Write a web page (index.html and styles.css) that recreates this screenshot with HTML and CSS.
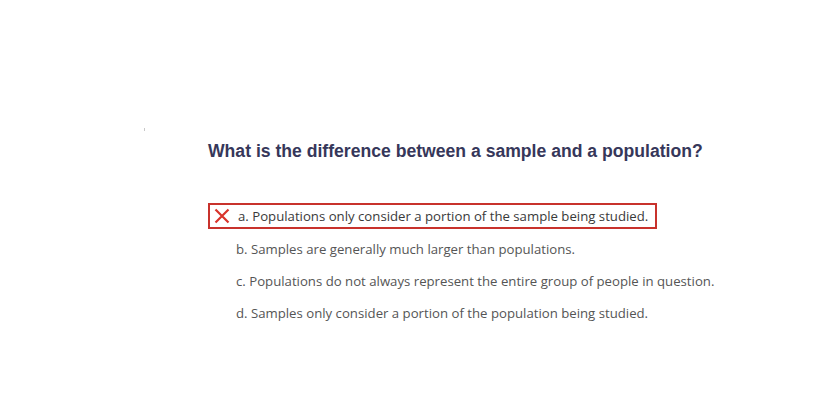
FILE: index.html
```html
<!DOCTYPE html>
<html>
<head>
<meta charset="utf-8">
<link rel="stylesheet" href="styles.css">
</head>
<body>
<div class="page">
  <span class="tick"></span>
  <div class="question">
    <h2 class="title">What is the difference between a sample and a population?</h2>
    <ul class="options">
      <li class="option wrong">
        <svg class="xicon" width="16" height="16" viewBox="0 0 16 16"><path d="M1.5 1.5 L14.5 14.5 M14.5 1.5 L1.5 14.5" stroke="#d9342b" stroke-width="2.2" fill="none"/></svg>
        <span>a. Populations only consider a portion of the sample being studied.</span>
      </li>
      <li class="option"><span>b. Samples are generally much larger than populations.</span></li>
      <li class="option"><span>c. Populations do not always represent the entire group of people in question.</span></li>
      <li class="option"><span>d. Samples only consider a portion of the population being studied.</span></li>
    </ul>
  </div>
</div>
</body>
</html>
```

FILE: styles.css
```css
html, body {
  margin: 0;
  padding: 0;
  background: #fff;
}
.page {
  position: relative;
  width: 814px;
  height: 404px;
}
.tick {
  position: absolute;
  left: 144px;
  top: 128px;
  width: 1px;
  height: 3px;
  background: #c8c8c8;
}
.question {
  padding: 140px 0 0 208px;
}
.title {
  margin: 0;
  font-family: "Liberation Sans", Arial, sans-serif;
  font-weight: bold;
  font-size: 17.6px;
  line-height: 22px;
  color: #36375a;
}
.options {
  list-style: none;
  margin: 41px 0 0 0;
  padding: 0;
  font-family: "Open Sans", sans-serif;
  font-size: 13.2px;
  color: #555;
}
.option {
  display: flex;
  align-items: center;
  height: 26px;
  padding-left: 28px;
  margin-bottom: 6px;
}
.option.wrong {
  box-sizing: border-box;
  width: 449px;
  border: 2px solid #c8322c;
  padding-left: 4px;
  gap: 8px;
  color: #3a3a3a;
  margin-bottom: 7px;
}
.xicon {
  flex: none;
}
```
